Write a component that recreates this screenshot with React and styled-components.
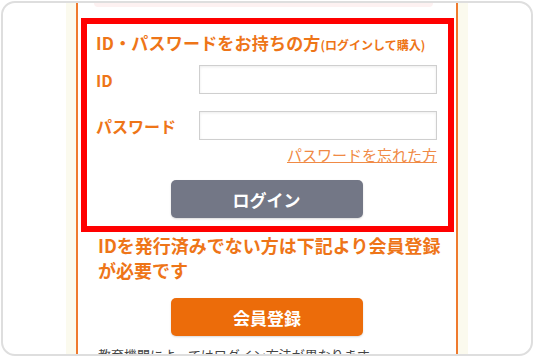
import React from 'react';
import styled, { createGlobalStyle } from 'styled-components';

const GlobalStyle = createGlobalStyle`
  body {
    margin: 0;
    background: #fff;
    font-family: "Noto Sans CJK JP", "Noto Sans", sans-serif;
  }
`;

const Frame = styled.div`
  width: 532px;
  height: 355px;
  margin: 1px;
  box-sizing: border-box;
  border: 2px solid #dedede;
  border-radius: 14px;
  overflow: hidden;
  background: #fff;
  display: flex;
`;

const Column = styled.div`
  margin-left: 63px;
  width: 402px;
  padding: 0 10px;
  box-sizing: border-box;
  background: #fbfaee;
`;

const Panel = styled.div`
  height: 100%;
  background: #fff;
  border-left: 2px solid #ef7a2e;
  border-right: 2px solid #ef7a2e;
`;

const TopStrip = styled.div`
  height: 4px;
  margin: 0 23px 0 16px;
  background: #fdf1f1;
  border-radius: 0 0 10px 10px;
`;

const LoginBox = styled.div`
  margin: 11px 2px 0 3px;
  border: 6px solid #ff0000;
  padding: 7px 11px 8px 9px;
`;

const Title = styled.h2`
  margin: 0 0 8px;
  font-size: 17px;
  line-height: 24px;
  font-weight: bold;
  color: #ee7518;
  white-space: nowrap;
  letter-spacing: 0.2px;
`;

const TitleNote = styled.span`
  font-size: 12px;
  letter-spacing: 0;
`;

const Row = styled.div`
  display: flex;
  align-items: center;
  height: 29px;
  margin-bottom: ${p => p.$gap}px;
`;

const Label = styled.label`
  width: 103px;
  font-size: 16px;
  font-weight: bold;
  color: #ee7518;
`;

const Input = styled.input`
  flex: 1;
  height: 29px;
  box-sizing: border-box;
  border: 1px solid #cfcfcf;
  background: #fff;
  box-shadow: inset 0 1px 3px rgba(0, 0, 0, 0.08);
  outline: none;
`;

const Forgot = styled.div`
  text-align: right;
  margin: 3px 0 0;
  line-height: 22px;
`;

const ForgotLink = styled.a`
  font-size: 15px;
  color: #f08a45;
  text-decoration: underline;
`;

const Button = styled.button`
  display: block;
  width: 192px;
  height: 38px;
  margin: ${p => p.$margin};
  border: none;
  border-radius: 5px;
  background: ${p => p.$color};
  color: #fff;
  font-family: inherit;
  font-size: 17px;
  font-weight: bold;
  box-shadow: 0 1px 2px rgba(0, 0, 0, 0.15);
`;

const Notice = styled.p`
  margin: 1px 0 0 20px;
  font-size: 18px;
  line-height: 25px;
  font-weight: bold;
  color: #ee7518;
  white-space: nowrap;
`;

const Footnote = styled.p`
  margin: 10px 0 0 20px;
  font-size: 13px;
  line-height: 18px;
  color: #444;
  white-space: nowrap;
`;

const App = () => (
  <>
    <GlobalStyle />
    <Frame>
      <Column>
        <Panel>
          <TopStrip />
          <LoginBox>
            <Title>
              ID・パスワードをお持ちの方<TitleNote>(ログインして購入)</TitleNote>
            </Title>
            <Row $gap={17}>
              <Label>ID</Label>
              <Input type="text" />
            </Row>
            <Row $gap={0}>
              <Label>パスワード</Label>
              <Input type="password" />
            </Row>
            <Forgot>
              <ForgotLink href="#">パスワードを忘れた方</ForgotLink>
            </Forgot>
            <Button $color="#737786" $margin="14px auto 0">ログイン</Button>
          </LoginBox>
          <Notice>
            IDを発行済みでない方は下記より会員登録
            <br />
            が必要です
          </Notice>
          <Button $color="#ec6c0a" $margin="15px auto 0">会員登録</Button>
          <Footnote>教育機関によってはログイン方法が異なります</Footnote>
        </Panel>
      </Column>
    </Frame>
  </>
);

export default App;
